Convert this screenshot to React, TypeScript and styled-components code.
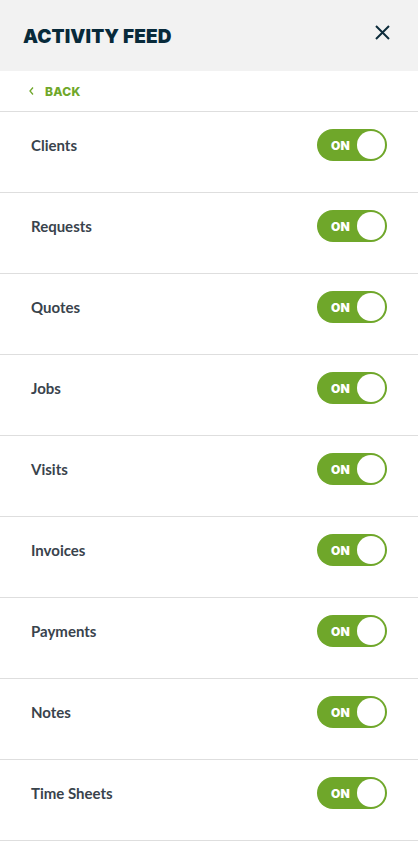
import React, { useState } from "react";
import styled, { createGlobalStyle } from "styled-components";

const GlobalStyle = createGlobalStyle`
  html, body {
    margin: 0;
    padding: 0;
    background: #ffffff;
  }
  body {
    font-family: "Lato", "Liberation Sans", sans-serif;
  }
`;

const Panel = styled.div`
  width: 418px;
  min-height: 849px;
  background: #ffffff;
`;

const Header = styled.header`
  height: 71px;
  background: #f2f2f2;
  display: flex;
  align-items: center;
  justify-content: space-between;
  padding: 0 26px 0 23px;
  box-sizing: border-box;
`;

const Title = styled.h1`
  margin: 0;
  font-family: "Inter", sans-serif;
  font-weight: 900;
  font-size: 19px;
  letter-spacing: 0.1px;
  color: #082a3a;
  padding-top: 1px;
`;

const CloseButton = styled.button`
  border: 0;
  background: none;
  padding: 0;
  width: 20px;
  height: 20px;
  display: flex;
  align-items: center;
  justify-content: center;
  margin-top: -6px;
  cursor: pointer;
`;

const BackRow = styled.div`
  height: 40px;
  display: flex;
  align-items: center;
  gap: 11px;
  padding: 0 0 0 29px;
  border-bottom: 1px solid #dedede;
  color: #6fa72a;
  font-family: "Inter", sans-serif;
  font-weight: 800;
  font-size: 12px;
  letter-spacing: 0.3px;
`;

const Row = styled.div`
  height: 81px;
  box-sizing: border-box;
  display: flex;
  align-items: flex-start;
  justify-content: space-between;
  padding: 17px 31px 0 31px;
  border-bottom: 1px solid #dedede;
`;

const Label = styled.span`
  font-family: "Lato", sans-serif;
  font-weight: 700;
  font-size: 15px;
  color: #39434c;
  line-height: 32px;
`;

const Toggle = styled.button<{ $on: boolean }>`
  width: 70px;
  height: 32px;
  border-radius: 16px;
  border: 0;
  padding: 0 2px 0 14px;
  box-sizing: border-box;
  background: ${(p) => (p.$on ? "#6fa72a" : "#c9ccce")};
  display: flex;
  align-items: center;
  justify-content: space-between;
  cursor: pointer;
`;

const ToggleText = styled.span`
  font-family: "Inter", sans-serif;
  font-weight: 900;
  font-size: 12px;
  color: #ffffff;
  letter-spacing: 0.2px;
`;

const Knob = styled.span`
  width: 28px;
  height: 28px;
  border-radius: 50%;
  background: #ffffff;
`;

const items = [
  "Clients",
  "Requests",
  "Quotes",
  "Jobs",
  "Visits",
  "Invoices",
  "Payments",
  "Notes",
  "Time Sheets",
];

const App = () => {
  const [state, setState] = useState<Record<string, boolean>>(
    Object.fromEntries(items.map((i) => [i, true]))
  );

  return (
    <>
      <GlobalStyle />
      <Panel>
        <Header>
          <Title>ACTIVITY FEED</Title>
          <CloseButton aria-label="Close">
            <svg width="15" height="15" viewBox="0 0 15 15">
              <path
                d="M1 1 L14 14 M14 1 L1 14"
                stroke="#0d2c3b"
                strokeWidth="2"
                fill="none"
              />
            </svg>
          </CloseButton>
        </Header>
        <BackRow>
          <svg width="5" height="8" viewBox="0 0 5 8">
            <path d="M4 0.5 L1 4 L4 7.5" stroke="#6fa72a" strokeWidth="1.3" fill="none" />
          </svg>
          BACK
        </BackRow>
        {items.map((item) => (
          <Row key={item}>
            <Label>{item}</Label>
            <Toggle
              $on={state[item]}
              onClick={() => setState({ ...state, [item]: !state[item] })}
            >
              <ToggleText>{state[item] ? "ON" : "OFF"}</ToggleText>
              <Knob />
            </Toggle>
          </Row>
        ))}
      </Panel>
    </>
  );
};

export default App;
